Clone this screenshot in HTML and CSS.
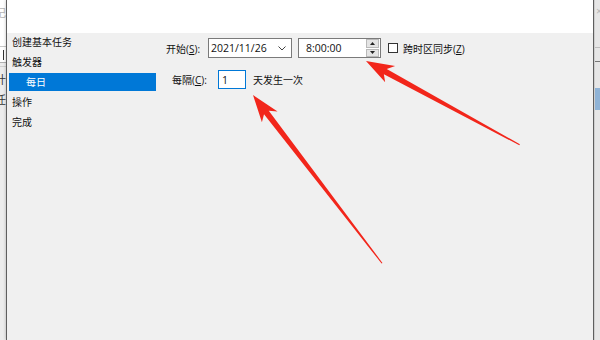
FILE: index.html
```html
<!DOCTYPE html>
<html lang="zh-CN">
<head>
<meta charset="utf-8">
<title>创建基本任务</title>
<link rel="stylesheet" href="styles.css">
</head>
<body>
<div class="screen">
  <div class="bg bg-left">
    <div class="bgl-top"><span class="ghost">记</span></div>
    <div class="bgl-box"><span class="bar"></span></div>
    <div class="bgl-rest">
      <span class="ghost dark">计</span>
      <span class="ghost dark">任</span>
    </div>
  </div>
  <div class="dialog">
    <div class="header"></div>
    <div class="main">
      <ul class="nav">
        <li>创建基本任务</li>
        <li>触发器</li>
        <li class="sel">每日</li>
        <li>操作</li>
        <li>完成</li>
      </ul>
      <div class="content">
        <div class="row row1">
          <span class="lbl lbl-start">开始(<u>S</u>):</span>
          <div class="field date">
            <span class="val">2021/11/26</span>
            <svg class="chev" width="8" height="5" viewBox="0 0 8 5"><polyline points="0.5,0.5 4,4 7.5,0.5" fill="none" stroke="#444" stroke-width="1"/></svg>
          </div>
          <div class="field time">
            <span class="val">8:00:00</span>
            <div class="spin">
              <span class="btn"><svg width="5" height="3" viewBox="0 0 5 3"><polygon points="0,3 2.5,0 5,3" fill="#222"/></svg></span>
              <span class="btn"><svg width="5" height="3" viewBox="0 0 5 3"><polygon points="0,0 2.5,3 5,0" fill="#222"/></svg></span>
            </div>
          </div>
          <span class="check"></span>
          <span class="chk-label">跨时区同步(<u>Z</u>)</span>
        </div>
        <div class="row row2">
          <span class="lbl lbl-every">每隔(<u>C</u>):</span>
          <div class="field num">1</div>
          <span class="after">天发生一次</span>
        </div>
      </div>
    </div>
  </div>
  <div class="bg bg-right">
    <div class="bgr-top"><span class="ghost">×</span></div>
    <div class="bgr-line"></div>
    <div class="bgr-line dark"></div>
    <div class="bgr-blue"></div>
  </div>
  <svg class="arrows" width="600" height="340" viewBox="0 0 600 340">
    <polygon transform="translate(366,61) rotate(28.6)" points="0,0 28,-9.5 22,-3 175,-0.5 175,0.6 22,3 27,9.5" fill="#f2261b"/>
    <polygon transform="translate(253,95) rotate(52.5)" points="0,0 28,-9.5 22,-3 212,-0.5 212,0.6 22,3 27,9.5" fill="#f2261b"/>
  </svg>
</div>
</body>
</html>
```

FILE: styles.css
```css
* { box-sizing: border-box; }
body {
  margin: 0;
  width: 600px;
  height: 340px;
  overflow: hidden;
  font-family: "Open Sans", "Noto Sans CJK SC", sans-serif;
  font-size: 10px;
  color: #111;
  background: #f0f0f0;
}
.screen {
  position: relative;
  display: flex;
  width: 600px;
  height: 340px;
  background: #f0f0f0;
}
.bg {
  width: 6px;
  flex: none;
  overflow: hidden;
  display: flex;
  flex-direction: column;
}
.bg-left { background: #ececec; }
.bgl-top {
  height: 47px;
  background: #fff;
  border-bottom: 1px solid #c8c8c8;
  display: flex;
  justify-content: flex-end;
  padding-top: 6px;
}
.bgl-box {
  height: 16px;
  background: #fff;
  border-bottom: 1px solid #b0b0b0;
  display: flex;
  justify-content: flex-end;
  align-items: center;
  padding-right: 2px;
}
.bgl-box .bar { width: 1px; height: 10px; background: #333; }
.bgl-rest {
  display: flex;
  flex-direction: column;
  align-items: flex-end;
  gap: 6px;
  padding-top: 6px;
  border-top: 1px solid #d0d0d0;
  margin-top: 3px;
}
.ghost {
  flex: none;
  font-size: 11px;
  line-height: 14px;
  color: #b5b5b5;
  white-space: nowrap;
}
.ghost.dark { color: #333; }
.bg-right { background: #e6e6e6; border-left: 1px solid #cfcfcf; }
.bgr-top { height: 47px; padding-top: 4px; padding-left: 1px; }
.bgr-line { height: 1px; background: #bdbdbd; margin-bottom: 13px; }
.bgr-line.dark { background: #777; margin-bottom: 26px; }
.bgr-blue { height: 22px; background: #8fb3d6; }

.dialog {
  width: 588px;
  flex: none;
  border-left: 1px solid #5e5e5e;
  border-right: 1px solid #5e5e5e;
  display: flex;
  flex-direction: column;
  background: #f0f0f0;
  box-shadow: 0 0 3px rgba(0,0,0,0.25);
}
.header {
  height: 33px;
  flex: none;
  background: #fff;
}
.main {
  flex: 1;
  display: flex;
}
.nav {
  list-style: none;
  margin: 0;
  padding: 0 0 0 2px;
  width: 149px;
  flex: none;
}
.nav li {
  height: 18px;
  line-height: 18px;
  margin-bottom: 2px;
  padding-left: 3px;
  color: #111;
  white-space: nowrap;
}
.nav li.sel {
  background: #0078d7;
  color: #fff;
  padding-left: 17px;
}
.content {
  flex: 1;
  display: flex;
  flex-direction: column;
}
.row {
  display: flex;
  align-items: center;
  white-space: nowrap;
}
.row1 { margin-top: 5px; height: 20px; padding-left: 10px; }
.row2 { margin-top: 12px; height: 19px; padding-left: 16px; }
.lbl-start { width: 42px; }
.lbl-every { width: 46px; }
u { text-decoration: underline; text-underline-offset: 1px; }
.field {
  background: #fff;
  border: 1px solid #7a7a7a;
  height: 20px;
  display: flex;
  align-items: center;
  font-size: 10.5px;
}
.date {
  width: 84px;
  padding-left: 2px;
  padding-right: 5px;
  justify-content: space-between;
}
.chev { display: block; }
.time {
  width: 83px;
  margin-left: 6px;
  padding-left: 7px;
  padding-right: 1px;
  justify-content: space-between;
}
.spin {
  width: 13px;
  height: 18px;
  display: flex;
  flex-direction: column;
  gap: 1px;
}
.spin .btn {
  flex: 1;
  background: #e4e4e4;
  border: 1px solid #b9b9b9;
  display: flex;
  align-items: center;
  justify-content: center;
}
.spin svg { display: block; }
.check {
  width: 10px;
  height: 10px;
  margin-left: 7px;
  background: #fff;
  border: 1px solid #333;
  flex: none;
}
.chk-label { margin-left: 5px; }
.num {
  width: 28px;
  height: 19px;
  border-color: #0078d7;
  padding-left: 3px;
}
.after { margin-left: 7px; }
.arrows {
  position: absolute;
  left: 0;
  top: 0;
  pointer-events: none;
}
```
